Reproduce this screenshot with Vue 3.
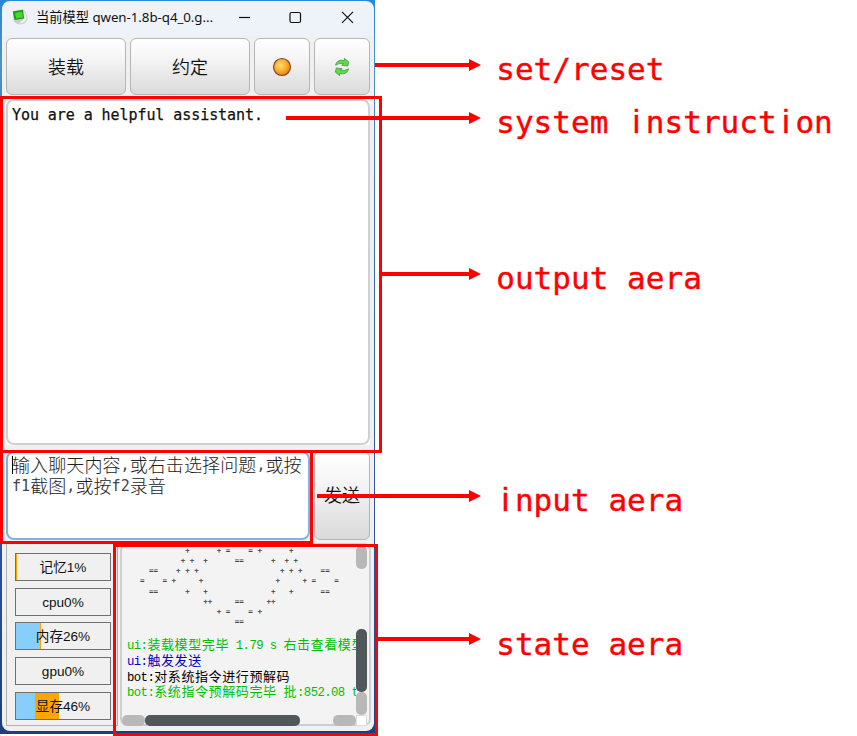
<script setup>
const meters = [
  { label: '记忆1%', blue: 0, orange: 1 },
  { label: 'cpu0%', blue: 0, orange: 0 },
  { label: '内存26%', blue: 25.5, orange: 1 },
  { label: 'gpu0%', blue: 0, orange: 0 },
  { label: '显存46%', blue: 20.5, orange: 25 }
]

// Columns of the console banner: "=" cells and "+" cells of each row.
const banner = [
  { eq: [19, 24], plus: [10, 17, 26, 33] },
  { eq: [21, 22], plus: [9, 11, 14, 29, 32, 34] },
  { eq: [2, 3, 40, 41], plus: [8, 10, 12, 31, 33, 35] },
  { eq: [0, 5, 38, 43], plus: [7, 13, 30, 36] },
  { eq: [2, 3, 40, 41], plus: [10, 14, 29, 33] },
  { eq: [21, 22], plus: [14, 15, 28, 29] },
  { eq: [19, 24], plus: [17, 26] },
  { eq: [21, 22], plus: [] }
]
const art = banner
  .map(({ eq, plus }) =>
    Array.from({ length: 44 }, (_, c) => (eq.includes(c) ? '=' : plus.includes(c) ? '+' : ' ')).join('')
  )
  .join('\n')

const logs = [
  { text: 'ui:装载模型完毕 1.79 s 右击查看模型', tone: 'green' },
  { text: 'ui:触发发送', tone: 'navy' },
  { text: 'bot:对系统指令进行预解码', tone: 'black' },
  { text: 'bot:系统指令预解码完毕 批:852.08 t', tone: 'green' }
]
const hint = ['输入聊天内容,或右击选择问题,或按', 'f1截图,或按f2录音']

// Latin and Han runs keep a 1:2 column ratio.
const runs = (s) =>
  (s.match(/[\x00-\x7f]+|[^\x00-\x7f]+/g) || []).map((t) => ({ t, han: t.charCodeAt(0) > 127 }))

const arrows = [
  { x: 375, y: 65 },
  { x: 286, y: 118 },
  { x: 381, y: 274 },
  { x: 317, y: 496 },
  { x: 378, y: 639 }
]
const PITCH = 18.7
const labels = [
  { text: 'set/reset', y: 80 },
  { text: 'system instruction', y: 133 },
  { text: 'output aera', y: 289 },
  { text: 'input aera', y: 511 },
  { text: 'state aera', y: 655 }
].map((l) => ({
  ...l,
  xs: [...l.text].map((c, i) => (496.2 + i * PITCH + (c === 'i' ? 5.6 : 0)).toFixed(1)).join(' '),
  parts: l.text.split(/(i)/).filter(Boolean)
}))
</script>

<template>
  <div class="stage">
    <div class="window">
      <header class="titlebar">
        <svg class="logo" width="18" height="18" viewBox="0 0 18 18">
          <path d="M2 3 L12 1.5 Q16 4 16.500 11 Q15 16 9 16.500 Q4 16 2.500 12z" fill="#c9cccf" />
          <path d="M12 2.500 Q16 6 15.500 11 Q14 15 8 15.500 L12 12z" fill="#f4f5f5" />
          <path d="M1.800 3.500 L12 1.800 L13.200 10.500 L3.500 12z" fill="#159b18" />
          <path d="M4 5 L11 3.500 L12 9.500 L5.200 10.500z" fill="#43d92c" />
        </svg>
        <span class="title">当前模型 qwen-1.8b-q4_0.g...</span>
        <svg class="winctl" width="120" height="16" viewBox="0 0 120 16">
          <path d="M1 8.500H12" stroke="#111" stroke-width="1.2" />
          <rect x="52" y="3.500" width="10.500" height="10" rx="1.500" fill="none" stroke="#111" stroke-width="1.2" />
          <path d="M104 2.800L115 13.800M115 2.800L104 13.800" stroke="#111" stroke-width="1.200" />
        </svg>
      </header>

      <div class="toolbar">
        <button class="btn">装载</button>
        <button class="btn">约定</button>
        <button class="btn">
          <svg width="20" height="20" viewBox="0 0 20 20">
            <defs>
              <radialGradient id="orb" cx="42%" cy="40%" r="60%">
                <stop offset="0" stop-color="#ffe070" />
                <stop offset="0.55" stop-color="#fbb030" />
                <stop offset="1" stop-color="#ec8114" />
              </radialGradient>
            </defs>
            <circle cx="10" cy="10" r="8.500" fill="url(#orb)" stroke="#854523" stroke-width="1.200" />
          </svg>
        </button>
        <button class="btn">
          <svg width="20" height="20" viewBox="0 0 20 20">
            <g fill="#5bdc45" stroke="#2c9a2c" stroke-width="0.700" stroke-linejoin="round">
              <path d="M3.500 8.200 Q4.500 3.600 9 3.200 L12.500 3.500 L12.300 1.300 L16.600 4.800 L15.800 9 L9.800 8.300 L11.800 6.700 Q7 5.600 3.500 8.200z" />
              <path d="M16.500 11.800 Q15.500 16.400 11 16.800 L7.500 16.500 L7.700 18.700 L3.400 15.200 L4.200 11 L10.200 11.700 L8.200 13.300 Q13 14.400 16.500 11.800z" />
            </g>
          </svg>
        </button>
      </div>

      <div class="output">You are a helpful assistant.</div>

      <div class="entry">
        <div class="input">
          <div v-for="line in hint" :key="line" class="hint">
            <span v-for="(r, i) in runs(line)" :key="i" :class="{ han: r.han }">{{ r.t }}</span>
          </div>
          <i class="caret"></i>
        </div>
        <button class="btn send">发送</button>
      </div>

      <div class="status">
        <div class="meters">
          <div v-for="m in meters" :key="m.label" class="meter">
            <i class="blue" :style="{ width: m.blue + '%' }"></i>
            <i class="orange" :style="{ width: m.orange + '%' }"></i>
            <span>{{ m.label }}</span>
          </div>
        </div>
        <div class="console">
          <div class="view">
            <pre class="art">{{ art }}</pre>
            <div v-for="l in logs" :key="l.text" class="log" :class="l.tone">
              <span v-for="(r, i) in runs(l.text)" :key="i" :class="{ han: r.han }">{{ r.t }}</span>
            </div>
          </div>
          <div class="vbar"><i class="step"></i><i class="gap"></i><i class="thumb"></i><i class="step"></i></div>
          <div class="hbar"><i class="step"></i><i class="thumb"></i><i class="gap"></i><i class="step"></i></div>
          <div class="corner"></div>
        </div>
      </div>
    </div>

    <svg class="notes" width="857" height="736" viewBox="0 0 857 736">
      <g fill="none" stroke="#f00" stroke-width="3">
        <rect x="1.500" y="97.500" width="379" height="354" />
        <rect x="1.500" y="451.500" width="310" height="91" />
        <rect x="114.500" y="545.500" width="262" height="189" />
      </g>
      <g v-for="a in arrows" :key="a.y" fill="#f00">
        <rect :x="a.x" :y="a.y - 2" :width="470 - a.x" height="4" />
        <path :d="`M469 ${a.y - 6}L481 ${a.y}L469 ${a.y + 6}z`" />
      </g>
      <text v-for="l in labels" :key="l.y" :x="l.xs" :y="l.y" class="label"><tspan
        v-for="(p, i) in l.parts" :key="i" :class="{ thin: p === 'i' }">{{ p }}</tspan></text>
    </svg>
  </div>
</template>

<style>
body {
  margin: 0;
  background: #fff;
}
</style>

<style scoped>
* {
  box-sizing: border-box;
}
.stage {
  position: relative;
  width: 857px;
  height: 736px;
  overflow: hidden;
  background: #fff;
}
.window {
  width: 375px;
  height: 734px;
  padding: 1px 1px 3px 2px;
  background: linear-gradient(#2687d8, #4c93c4 8%, #3a6db8 30%, #2e58a8 65%, #1d3f7d);
}
.window > * {
  background: #f0f0f0;
}
.titlebar {
  display: flex;
  align-items: center;
  height: 35px;
  padding: 0 0 3px 9px;
  border-radius: 8px 8px 0 0;
  background: #eef3f9;
}
.logo {
  margin-top: -1px;
}
.title {
  width: 202px;
  margin-left: 7px;
  font: 13.3px/20px "Noto Sans", "Noto Sans CJK SC", sans-serif;
  letter-spacing: -0.05px;
  white-space: pre;
  color: #111;
}
.toolbar {
  display: grid;
  grid-template-columns: 120px 120px 56px 56px;
  column-gap: 4px;
  height: 63px;
  padding: 2px 4px 4px;
}
.toolbar .btn {
  padding-bottom: 2px;
}
.toolbar .btn svg {
  margin-top: 2px;
}
.btn {
  display: flex;
  align-items: center;
  justify-content: center;
  padding: 0;
  border: 1.5px solid #b5b5b5;
  border-radius: 6px;
  background: linear-gradient(#fff, #f5f5f5 35%, #dadada);
  font: 350 18px/20px "Noto Sans CJK SC", sans-serif;
  color: #111;
}
.output {
  position: relative;
  height: 352px;
  padding: 6px;
  border: 4px solid #f0f0f0;
  border-top-width: 0;
  border-bottom-width: 6px;
  background: #fff;
  font: 15px/20px "DejaVu Sans Mono", monospace;
  letter-spacing: -0.07px;
  -webkit-text-stroke: 0.25px #111;
  color: #111;
}
.output::before {
  content: "";
  position: absolute;
  inset: 0;
  border: 2px solid #ccd1d6;
  border-radius: 8px;
}
.entry {
  display: grid;
  grid-template-columns: 304px 56px;
  column-gap: 4px;
  height: 91px;
  padding: 0 4px;
}
.input {
  position: relative;
  height: 89px;
  padding: 2px 4px;
  border: 2px solid #7fb3dc;
  border-radius: 8px;
  background: #fff;
}
.hint {
  display: flex;
  height: 20.5px;
  font: 15.05px/20px "DejaVu Sans Mono", monospace;
  color: #444;
  white-space: pre;
}
.hint .han {
  margin-top: -1px;
  font: 300 18px/20px "Noto Sans CJK SC", sans-serif;
  letter-spacing: 0.1px;
  color: #222;
}
.caret {
  position: absolute;
  left: 4px;
  top: 3px;
  width: 1px;
  height: 18px;
  background: #000;
}
.send {
  height: 89px;
  padding-bottom: 4px;
}
.status {
  display: flex;
  gap: 2px;
  height: 189px;
  padding: 1px 2px 5px 4px;
  border-radius: 0 0 8px 8px;
}
.meters {
  display: grid;
  grid-template-rows: repeat(5, 28px);
  row-gap: 6.7px;
  width: 112px;
  padding: 9px 6px 0 8px;
  border: 1.5px solid #b0b0b0;
}
.meter {
  position: relative;
  display: flex;
  height: 28px;
  border: 1px solid #707070;
  background: #f0f0f0;
}
.meter i {
  height: 100%;
}
.meter .blue {
  background: #87cefa;
}
.meter .orange {
  background: #ffa500;
}
.meter span {
  position: absolute;
  inset: 0;
  text-align: center;
  font: 13.6px/27px "Liberation Sans", "Noto Sans CJK SC", sans-serif;
  color: #111;
}
.console {
  display: grid;
  grid-template-columns: 234px 11px;
  grid-template-rows: 169px 11px;
  width: 251px;
  height: 183px;
  padding-top: 1px;
  border: 2px solid #cbd0d4;
  border-radius: 7px;
  background: #f3f3f3;
}
.view {
  overflow: hidden;
  padding-left: 5px;
}
.art {
  margin: 0 0 9px 13px;
  font: bold 7.5px/10.15px "DejaVu Sans Mono", monospace;
  color: #484848;
}
.log {
  display: flex;
  align-items: baseline;
  height: 15.7px;
  font: 12.3px/13px "Liberation Mono", monospace;
  letter-spacing: -0.58px;
  white-space: pre;
}
.log .han {
  font: 13px/15.7px "Noto Sans CJK SC", sans-serif;
  letter-spacing: 0.6px;
}
.green {
  color: #00bf00;
}
.navy {
  color: #0000c8;
}
.black {
  color: #000;
}
.vbar,
.hbar {
  display: flex;
}
.vbar {
  flex-direction: column;
}
.step {
  flex: 0 0 23px;
  border-radius: 5px;
  background: #b8b8b8;
}
.thumb {
  border-radius: 5px;
  background: #50585b;
}
.vbar .thumb {
  flex: 0 0 63px;
}
.hbar .thumb {
  flex: 0 0 155px;
}
.gap {
  flex: 1;
}
.corner {
  border: 1px solid #ddd;
  background: #fff;
}
.notes {
  position: absolute;
  left: 0;
  top: 0;
}
.label {
  font: 31px "DejaVu Sans Mono", monospace;
  fill: #f00;
  stroke: #f00;
  stroke-width: 0.4px;
  white-space: pre;
}
.thin {
  font-family: "Liberation Sans", sans-serif;
  font-size: 33px;
}
</style>
